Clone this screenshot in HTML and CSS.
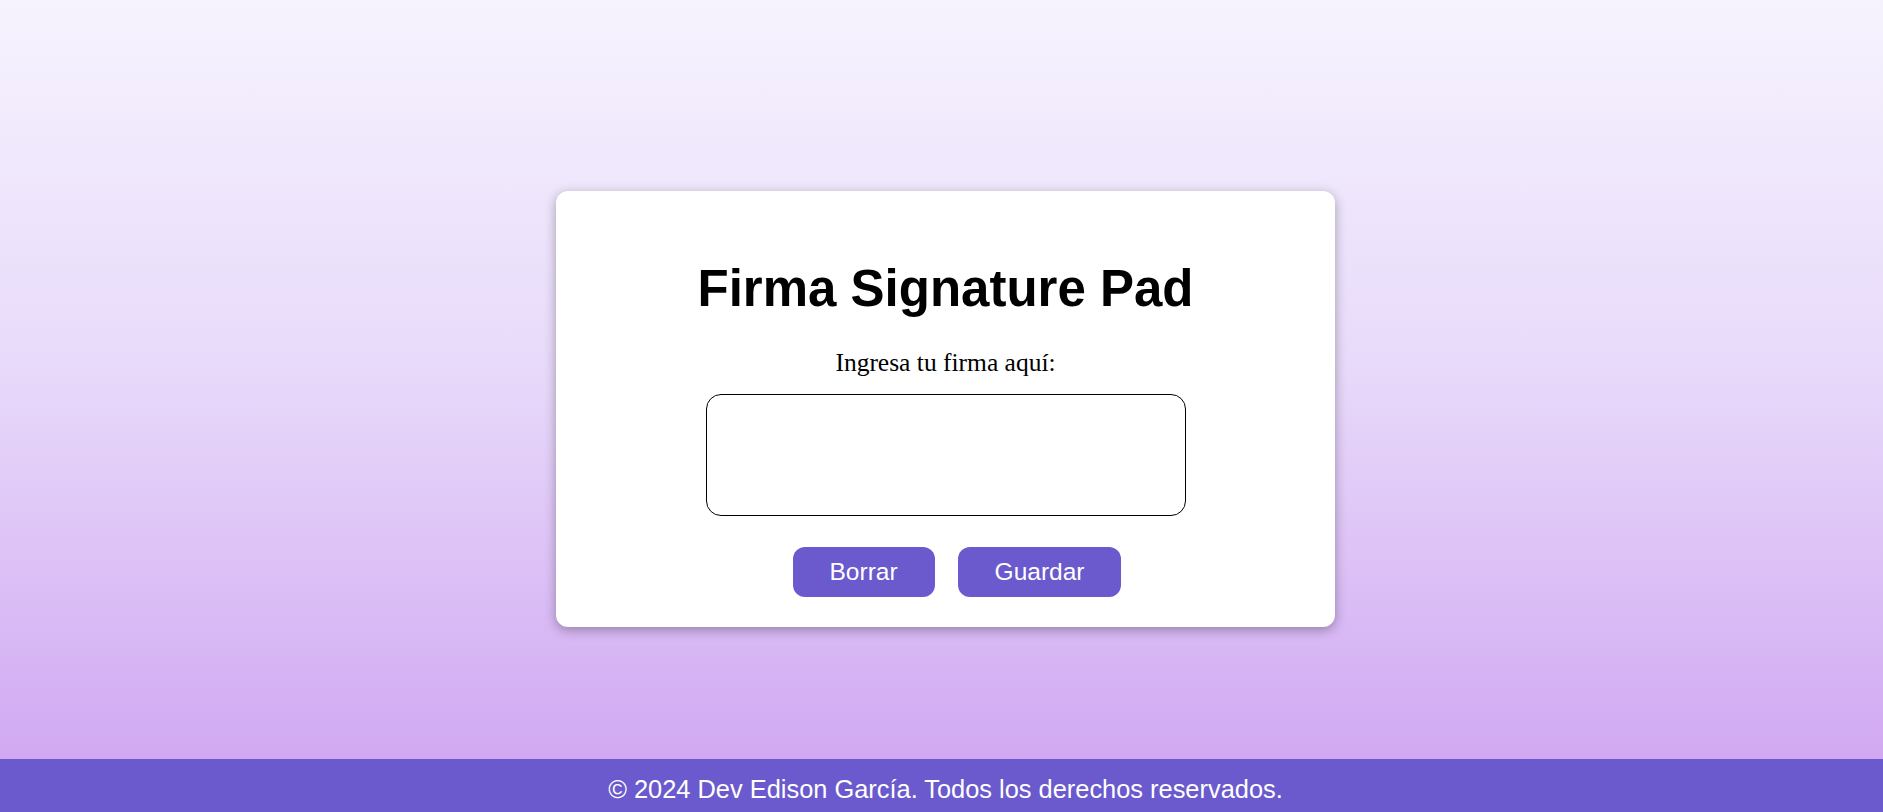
FILE: index.html
```html
<!DOCTYPE html>
<html lang="es">
<head>
<meta charset="utf-8">
<title>Firma Signature Pad</title>
<link rel="stylesheet" href="styles.css">
</head>
<body>
<div class="page">
  <main class="main">
    <section class="card">
      <h1 class="title">Firma Signature Pad</h1>
      <p class="label">Ingresa tu firma aquí:</p>
      <canvas class="pad" width="478" height="120"></canvas>
      <div class="actions">
        <button class="btn" type="button">Borrar</button>
        <button class="btn" type="button">Guardar</button>
      </div>
    </section>
  </main>
  <footer class="footer">© 2024 Dev Edison García. Todos los derechos reservados.</footer>
</div>
</body>
</html>
```

FILE: styles.css
```css
html, body {
  margin: 0;
  padding: 0;
}

body {
  font-family: "Liberation Sans", Arial, sans-serif;
}

.page {
  height: 812px;
  display: flex;
  flex-direction: column;
  background: linear-gradient(to bottom, #f6f3fe 0%, #e8dafa 45%, #cea2f1 100%);
  overflow: hidden;
}

.main {
  flex: 1;
  display: flex;
  justify-content: center;
  align-items: center;
  padding: 59px 0 0 8px;
}

.card {
  width: 779px;
  box-sizing: border-box;
  background: #ffffff;
  border-radius: 12px;
  box-shadow: 0 3px 12px rgba(0, 0, 0, 0.32);
  padding: 68px 0 30px;
  text-align: center;
}

.title {
  margin: 0 0 30px;
  font-family: "Liberation Sans", Arial, sans-serif;
  font-weight: bold;
  font-size: 51px;
  line-height: normal;
  color: #000;
}

.label {
  margin: 0 0 16px;
  font-family: "Liberation Serif", "Times New Roman", serif;
  font-size: 25.5px;
  line-height: normal;
  color: #000;
}

.pad {
  display: block;
  margin: 0 auto;
  width: 478px;
  height: 120px;
  border: 1px solid #000;
  border-radius: 15px;
  background: #fff;
}

.actions {
  margin-top: 31px;
  padding-left: 23px;
  display: flex;
  justify-content: center;
  gap: 23px;
}

.btn {
  font-family: "Liberation Sans", Arial, sans-serif;
  font-size: 24.5px;
  line-height: 28px;
  padding: 10.75px 37px;
  border: none;
  border-radius: 12px;
  background: #6a5acd;
  color: #ffffff;
  cursor: pointer;
}

.footer {
  height: 53px;
  box-sizing: border-box;
  padding: 16px 0 0 8px;
  background: #6a5acd;
  color: #ffffff;
  font-family: "Liberation Sans", Arial, sans-serif;
  font-size: 25.4px;
  line-height: 29px;
  text-align: center;
  white-space: nowrap;
}
```
